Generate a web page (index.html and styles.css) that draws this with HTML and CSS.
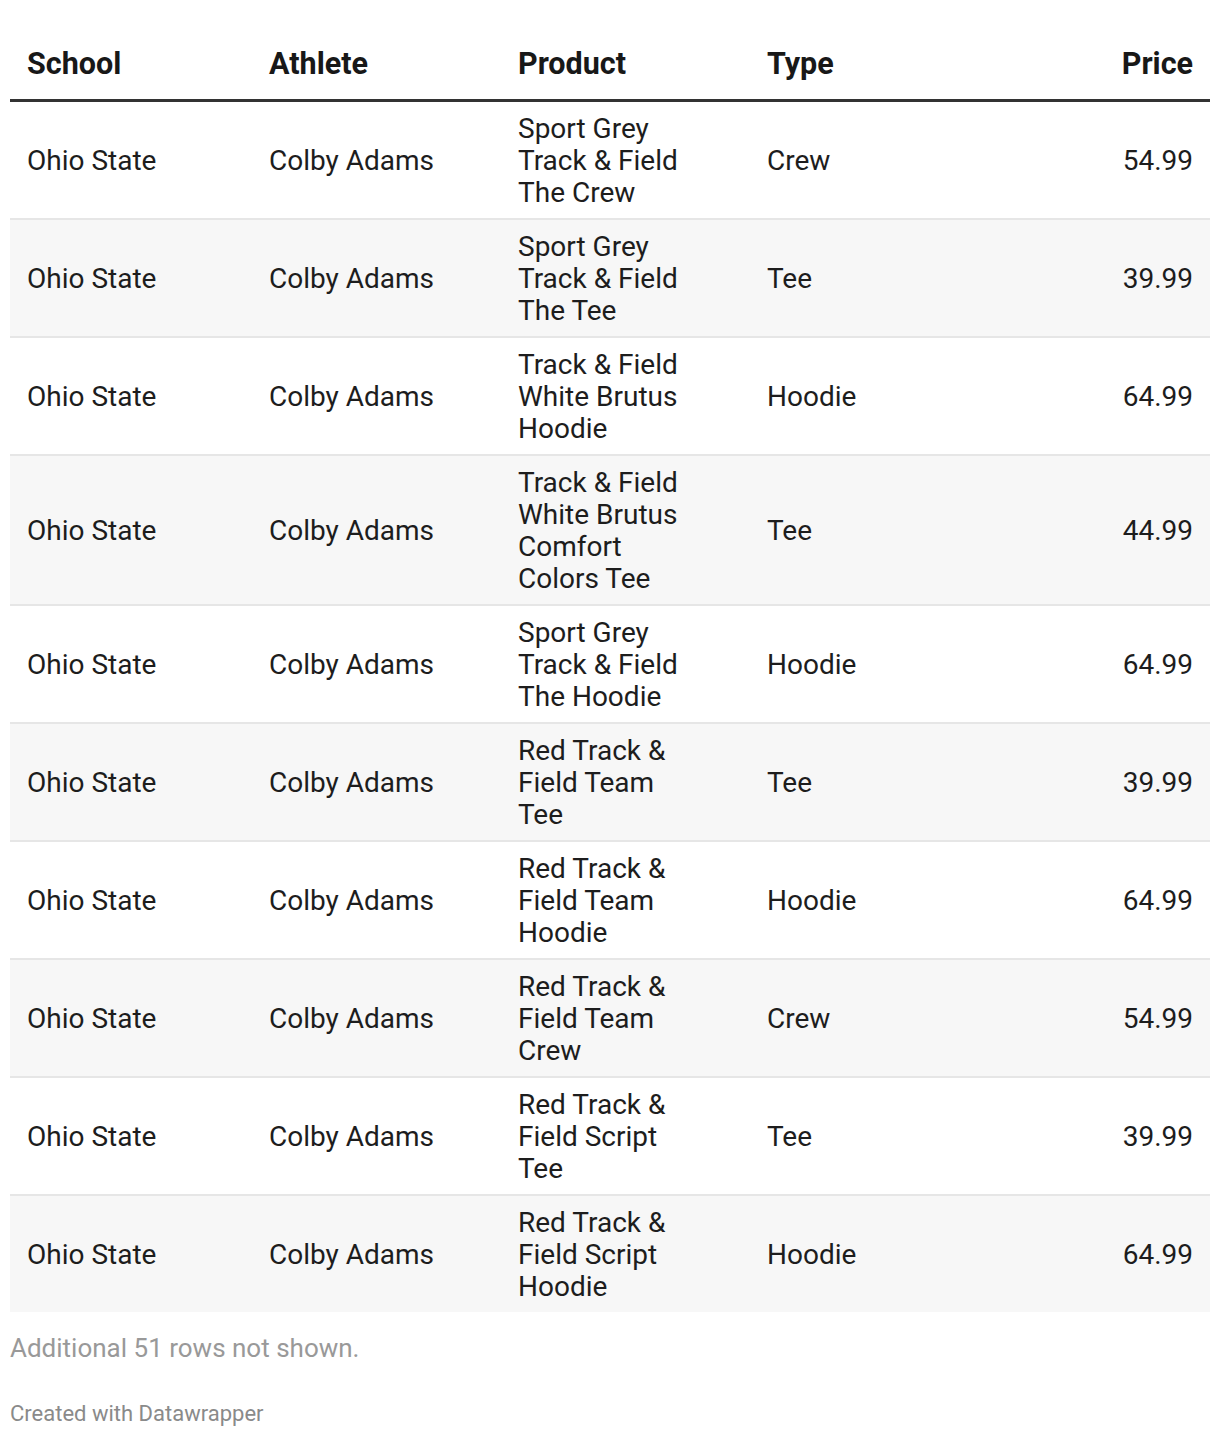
FILE: index.html
```html
<!DOCTYPE html>
<html>
<head>
<meta charset="utf-8">
<link rel="stylesheet" href="styles.css">
</head>
<body>
<div class="wrap">
  <table class="tbl">
    <colgroup>
      <col class="c-school"><col class="c-athlete"><col class="c-product"><col class="c-type"><col class="c-price">
    </colgroup>
    <thead>
      <tr><th>School</th><th>Athlete</th><th>Product</th><th>Type</th><th class="num">Price</th></tr>
    </thead>
    <tbody>
      <tr><td>Ohio State</td><td>Colby Adams</td><td><div class="prod">Sport Grey Track &amp; Field The Crew</div></td><td>Crew</td><td class="num">54.99</td></tr>
      <tr><td>Ohio State</td><td>Colby Adams</td><td><div class="prod">Sport Grey Track &amp; Field The Tee</div></td><td>Tee</td><td class="num">39.99</td></tr>
      <tr><td>Ohio State</td><td>Colby Adams</td><td><div class="prod">Track &amp; Field White Brutus Hoodie</div></td><td>Hoodie</td><td class="num">64.99</td></tr>
      <tr><td>Ohio State</td><td>Colby Adams</td><td><div class="prod">Track &amp; Field White Brutus Comfort Colors Tee</div></td><td>Tee</td><td class="num">44.99</td></tr>
      <tr><td>Ohio State</td><td>Colby Adams</td><td><div class="prod">Sport Grey Track &amp; Field The Hoodie</div></td><td>Hoodie</td><td class="num">64.99</td></tr>
      <tr><td>Ohio State</td><td>Colby Adams</td><td><div class="prod">Red Track &amp; Field Team Tee</div></td><td>Tee</td><td class="num">39.99</td></tr>
      <tr><td>Ohio State</td><td>Colby Adams</td><td><div class="prod">Red Track &amp; Field Team Hoodie</div></td><td>Hoodie</td><td class="num">64.99</td></tr>
      <tr><td>Ohio State</td><td>Colby Adams</td><td><div class="prod">Red Track &amp; Field Team Crew</div></td><td>Crew</td><td class="num">54.99</td></tr>
      <tr><td>Ohio State</td><td>Colby Adams</td><td><div class="prod">Red Track &amp; Field Script Tee</div></td><td>Tee</td><td class="num">39.99</td></tr>
      <tr><td>Ohio State</td><td>Colby Adams</td><td><div class="prod">Red Track &amp; Field Script Hoodie</div></td><td>Hoodie</td><td class="num">64.99</td></tr>
    </tbody>
  </table>
  <p class="note">Additional 51 rows not shown.</p>
  <p class="credit">Created with Datawrapper</p>
</div>
</body>
</html>
```

FILE: styles.css
```css
html, body {
  margin: 0;
  padding: 0;
  background: #ffffff;
}
body {
  font-family: Roboto, "Liberation Sans", sans-serif;
  color: #1d1d1d;
}
.wrap {
  padding: 10px 10px 0 10px;
}
.tbl {
  width: 1200px;
  border-collapse: collapse;
  table-layout: fixed;
  font-size: 28px;
  line-height: 32px;
}
.c-school { width: 242px; }
.c-athlete { width: 249px; }
.c-product { width: 249px; }
.c-type { width: 250px; }
.c-price { width: 210px; }
.tbl th {
  text-align: left;
  font-weight: 700;
  font-size: 30.5px;
  color: #181818;
  padding: 38px 17px 19px 17px;
  border-bottom: 3px solid #333333;
  vertical-align: middle;
}
.tbl td {
  padding: 11px 17px 9px 17px;
  border-bottom: 2px solid #e6e6e6;
  vertical-align: middle;
}
.tbl tbody tr:nth-child(even) td {
  background: #f7f7f7;
}
.tbl tbody tr:last-child td {
  border-bottom: none;
}
.tbl .num {
  text-align: right;
}
.prod {
  max-width: 178px;
}
.note {
  margin: 20px 0 0 0;
  font-size: 26px;
  line-height: 32px;
  color: #999999;
}
.credit {
  margin: 36px 0 0 0;
  font-size: 22px;
  line-height: 28px;
  color: #8a8a8a;
}
```
